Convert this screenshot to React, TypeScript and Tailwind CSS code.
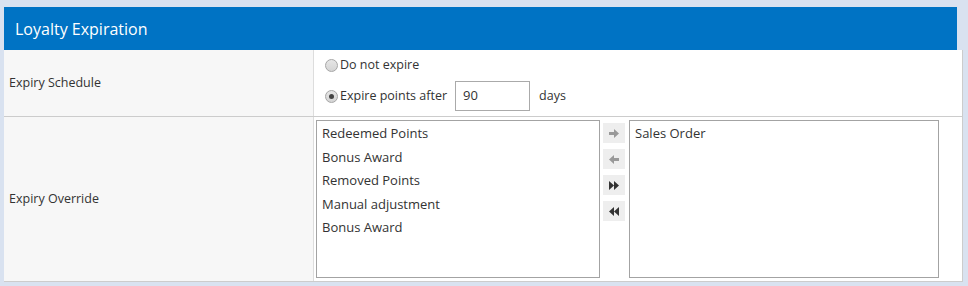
const font = { fontFamily: '"Open Sans", "Noto Sans", sans-serif' };

const available = [
  "Redeemed Points",
  "Bonus Award",
  "Removed Points",
  "Manual adjustment",
  "Bonus Award",
];

const selected = ["Sales Order"];

function Radio({ checked }: { checked?: boolean }) {
  return (
    <span className="flex h-[13px] w-[13px] items-center justify-center rounded-full border border-[#a6a6a6] bg-gradient-to-b from-[#e6e6e6] to-[#d4d4d4]">
      {checked && <span className="h-[5px] w-[5px] rounded-full bg-[#444]" />}
    </span>
  );
}

function ArrowBtn({ kind }: { kind: "right" | "left" | "ffwd" | "rew" }) {
  return (
    <button
      type="button"
      className="flex h-[20px] w-[22px] items-center justify-center bg-[#eeeeee]"
    >
      {kind === "right" && (
        <svg width="10" height="9" viewBox="0 0 10 9">
          <path d="M0 3h5V0l5 4.5L5 9V6H0z" fill="#999" />
        </svg>
      )}
      {kind === "left" && (
        <svg width="10" height="9" viewBox="0 0 10 9">
          <path d="M10 3H5V0L0 4.5 5 9V6h5z" fill="#999" />
        </svg>
      )}
      {kind === "ffwd" && (
        <svg width="10" height="9" viewBox="0 0 10 9">
          <path d="M0 0l5 4.5L0 9zM5 0l5 4.5L5 9z" fill="#333" />
        </svg>
      )}
      {kind === "rew" && (
        <svg width="10" height="9" viewBox="0 0 10 9">
          <path d="M5 0L0 4.5 5 9zM10 0L5 4.5 10 9z" fill="#333" />
        </svg>
      )}
    </button>
  );
}

function ListBox({ items, width }: { items: string[]; width: string }) {
  return (
    <div className={`${width} h-[158px] border border-[#a3a3a3] bg-white pt-[1px]`}>
      {items.map((it, i) => (
        <div key={i} className="flex h-[23.5px] items-center px-[5px] text-[13px] text-[#333]">
          {it}
        </div>
      ))}
    </div>
  );
}

export default function App() {
  return (
    <div className="min-h-[286px] w-[968px] bg-[#d9e2f0] pl-[4px] pt-[7px]" style={font}>
      <div className="flex h-[43px] w-[953px] items-center bg-[#0073c4] pl-[11px] text-[16px] text-white">
        Loyalty Expiration
      </div>
      <div className="w-[959px] border-b border-r border-[#cccccc] bg-white">
        <div className="flex h-[67px] border-b border-[#cccccc]">
          <div className="flex w-[310px] items-center border-r border-[#dddddd] bg-[#f7f7f7] pl-[5px] text-[12.5px] text-[#333]">
            Expiry Schedule
          </div>
          <div className="flex flex-col pl-[11px] pt-[6px] text-[12.5px] text-[#333]">
            <label className="flex h-[18px] items-center gap-[2px]">
              <Radio />
              <span>Do not expire</span>
            </label>
            <div className="mt-[7px] flex h-[30px] items-center">
              <label className="flex items-center gap-[2px]">
                <Radio checked />
                <span>Expire points after</span>
              </label>
              <div className="ml-[8px] flex h-[30px] w-[75px] items-center border border-[#aaaaaa] pl-[7px] text-[13px]">
                90
              </div>
              <span className="ml-[9px]">days</span>
            </div>
          </div>
        </div>
        <div className="flex h-[164px]">
          <div className="flex w-[310px] items-center border-r border-[#dddddd] bg-[#f7f7f7] pl-[5px] text-[12.5px] text-[#333]">
            Expiry Override
          </div>
          <div className="flex items-start pl-[2px] pt-[3px]">
            <ListBox items={available} width="w-[284px]" />
            <div className="ml-[3px] mt-[3px] flex flex-col gap-[6px]">
              <ArrowBtn kind="right" />
              <ArrowBtn kind="left" />
              <ArrowBtn kind="ffwd" />
              <ArrowBtn kind="rew" />
            </div>
            <div className="ml-[4px]">
              <ListBox items={selected} width="w-[310px]" />
            </div>
          </div>
        </div>
      </div>
    </div>
  );
}
